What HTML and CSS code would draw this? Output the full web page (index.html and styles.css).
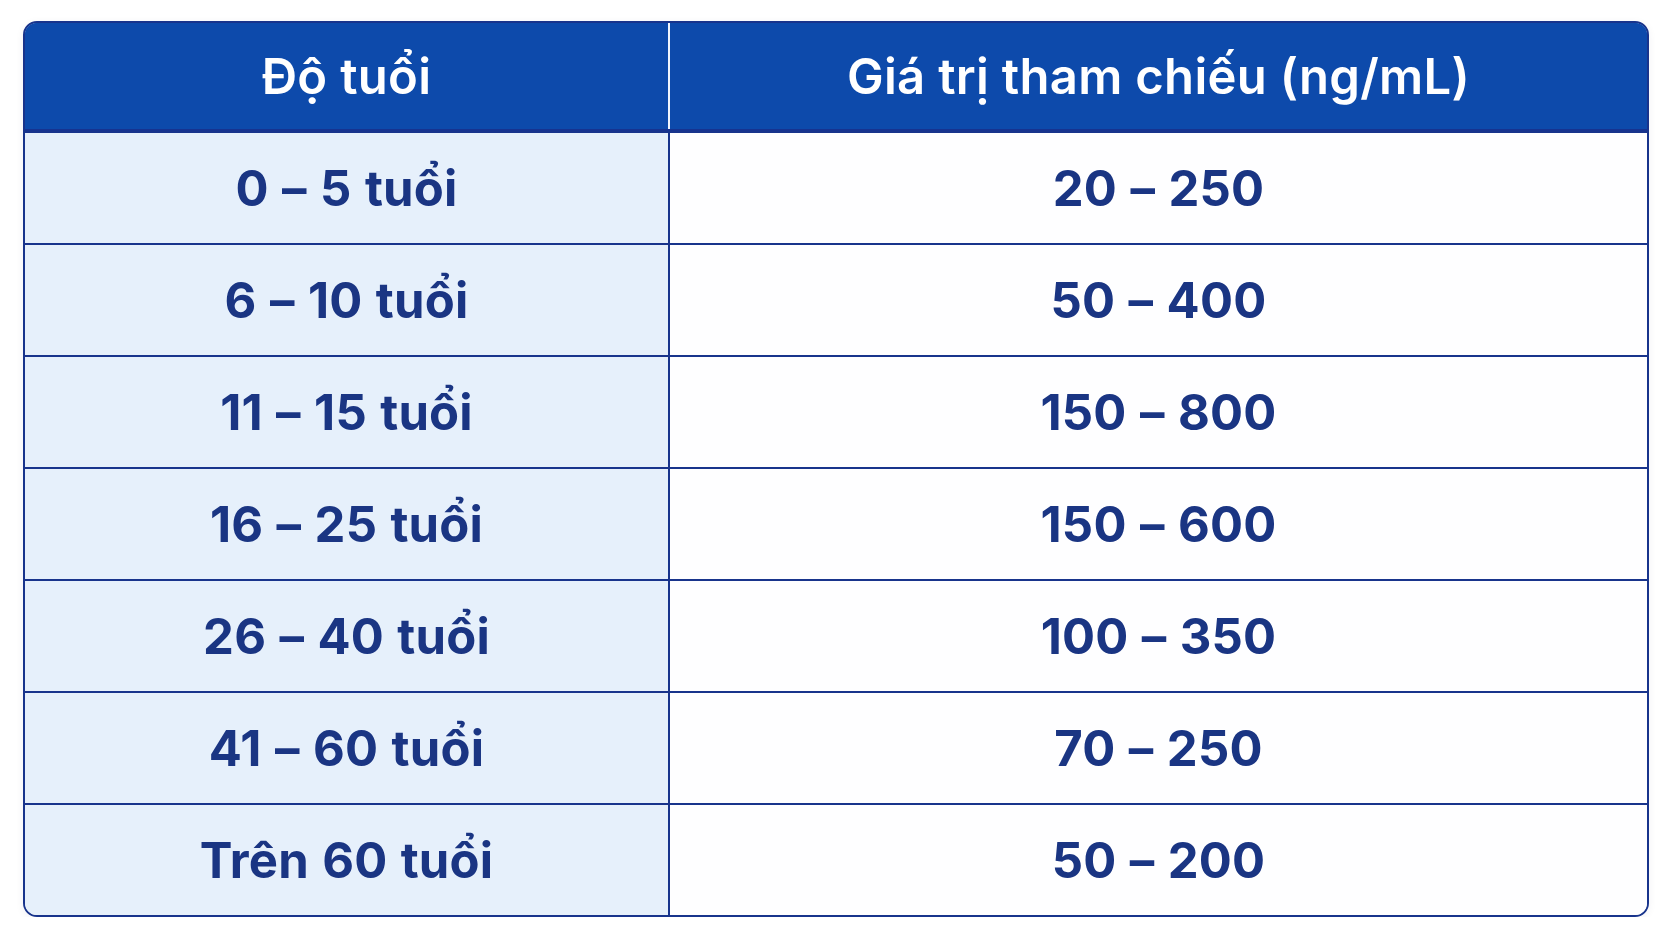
FILE: index.html
```html
<!DOCTYPE html>
<html lang="vi">
<head>
<meta charset="utf-8">
<title>Giá trị tham chiếu</title>
<link rel="stylesheet" href="styles.css">
</head>
<body>
<div class="page">
  <div class="table">
    <div class="row head">
      <div class="cell c1">Độ tuổi</div>
      <div class="cell c2">Giá trị tham chiếu (ng/mL)</div>
    </div>
    <div class="row">
      <div class="cell c1">0 – 5 tuổi</div>
      <div class="cell c2">20 – 250</div>
    </div>
    <div class="row">
      <div class="cell c1">6 – 10 tuổi</div>
      <div class="cell c2">50 – 400</div>
    </div>
    <div class="row">
      <div class="cell c1">11 – 15 tuổi</div>
      <div class="cell c2">150 – 800</div>
    </div>
    <div class="row">
      <div class="cell c1">16 – 25 tuổi</div>
      <div class="cell c2">150 – 600</div>
    </div>
    <div class="row">
      <div class="cell c1">26 – 40 tuổi</div>
      <div class="cell c2">100 – 350</div>
    </div>
    <div class="row">
      <div class="cell c1">41 – 60 tuổi</div>
      <div class="cell c2">70 – 250</div>
    </div>
    <div class="row">
      <div class="cell c1">Trên 60 tuổi</div>
      <div class="cell c2">50 – 200</div>
    </div>
  </div>
</div>
</body>
</html>
```

FILE: styles.css
```css
html, body {
  margin: 0;
  padding: 0;
  background: #ffffff;
}

.page {
  padding: 21px 0 0 23px;
}

.table {
  width: 1626px;
  box-sizing: border-box;
  border: 2px solid #18348c;
  border-radius: 14px;
  overflow: hidden;
  box-shadow: 0 2px 8px rgba(10, 30, 90, 0.06);
  font-family: Inter, "Noto Sans", sans-serif;
}

.row {
  display: grid;
  grid-template-columns: 643px 2px 1fr;
  height: 112px;
  border-top: 2px solid #18348c;
  box-sizing: border-box;
}

.row .c1 {
  grid-column: 1;
  background: #e6f0fb;
}

.row .c2 {
  grid-column: 3;
  background: #fefeff;
}

.row::before {
  content: "";
  grid-column: 2;
  grid-row: 1;
  background: #18348c;
}

.cell {
  grid-row: 1;
  display: flex;
  align-items: center;
  justify-content: center;
  font-size: 49px;
  font-weight: 700;
  color: #1a3583;
  letter-spacing: 0.2px;
  word-spacing: 1.5px;
}

.row.head {
  border-top: none;
  border-bottom: 2px solid #163390;
  background: #0d4aab;
  height: 108px;
}

.row.head::before {
  background: #f1f5fc;
  box-shadow: -1px 0 0 #173a8e, 1px 0 0 #173a8e;
}

.row.head .cell {
  background: #0d4aab;
  color: #ffffff;
  font-size: 49px;
  font-weight: 600;
  word-spacing: 0;
  letter-spacing: 0.3px;
}
```
